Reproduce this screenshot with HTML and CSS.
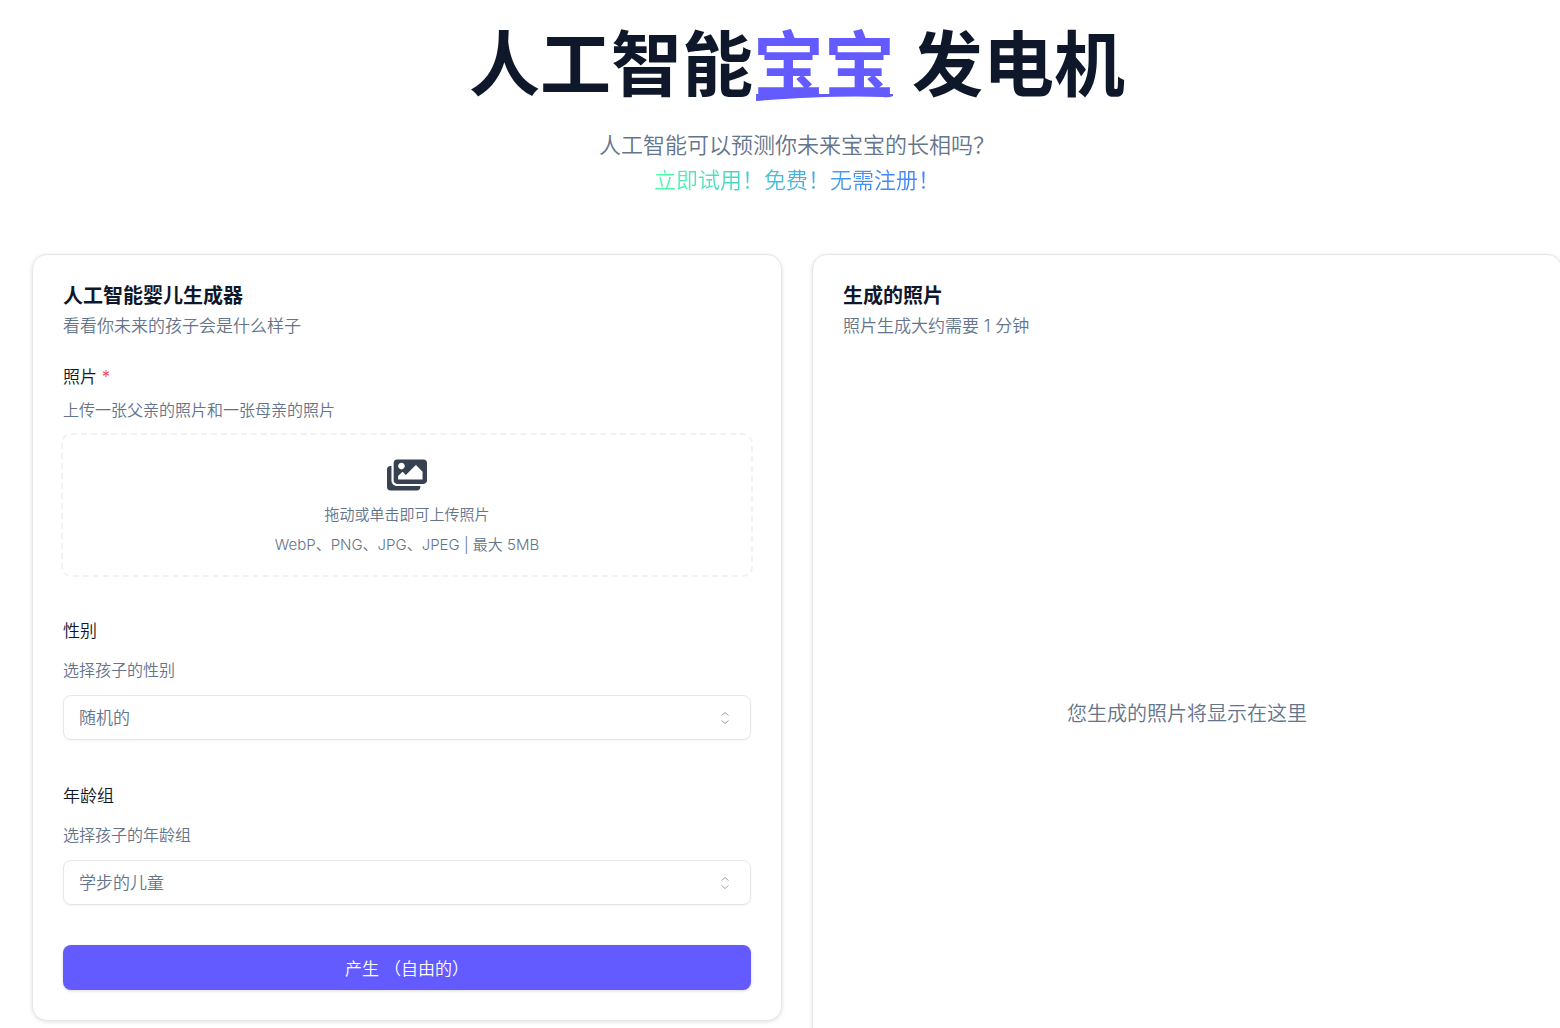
FILE: index.html
```html
<!DOCTYPE html>
<html lang="zh-CN">
<head>
<meta charset="utf-8">
<meta name="viewport" content="width=device-width, initial-scale=1">
<title>人工智能宝宝发电机</title>
<link rel="stylesheet" href="styles.css">
</head>
<body>
<main class="page">
  <header class="hero">
    <h1 class="hero-title">人工智能<span class="accent">宝宝<svg class="swash" viewBox="0 0 140 8" preserveAspectRatio="none" aria-hidden="true"><path d="M3 1H138V3Q134 5 128 4Q80 2 3 8Z"/></svg></span> 发电机</h1>
    <p class="hero-text">人工智能可以预测你未来宝宝的长相吗？<br><span class="gradient">立即试用！免费！无需注册！</span></p>
  </header>
  <div class="columns">
    <section class="card">
      <h2 class="card-title">人工智能婴儿生成器</h2>
      <p class="card-desc">看看你未来的孩子会是什么样子</p>
      <form class="form">
        <div class="field">
          <label class="label label-photo" for="photos">照片 <span class="required">*</span></label>
          <p class="help">上传一张父亲的照片和一张母亲的照片</p>
          <label class="drop">
            <input class="file" id="photos" type="file" accept="image/*" multiple>
            <svg class="drop-icon" viewBox="0 0 576 512" aria-hidden="true"><path d="M480 416v16c0 26.51-21.49 48-48 48H48c-26.51 0-48-21.49-48-48V176c0-26.51 21.49-48 48-48h16v208c0 44.112 35.888 80 80 80h336zm96-80V80c0-26.51-21.49-48-48-48H144c-26.51 0-48 21.49-48 48v256c0 26.51 21.49 48 48 48h384c26.51 0 48-21.49 48-48zM256 128c0 26.51-21.49 48-48 48s-48-21.49-48-48 21.49-48 48-48 48 21.49 48 48zm-96 144l55.515-55.515c4.686-4.686 12.284-4.686 16.971 0L272 256l135.515-135.515c4.686-4.686 12.284-4.686 16.971 0L512 208v112H160v-48z"/></svg>
            <span>拖动或单击即可上传照片</span>
            <span>WebP、PNG、JPG、JPEG | 最大 5MB</span>
          </label>
        </div>
        <div class="field">
          <label class="label" for="gender">性别</label>
          <p class="help">选择孩子的性别</p>
          <div class="select-wrap">
            <select class="select" id="gender"><option>随机的</option></select>
            <svg class="chevrons" viewBox="0 0 10 14" aria-hidden="true"><path d="M1.500 4.500L5 1.500L8.500 4.500M1.500 9.500L5 12.500L8.500 9.500"/></svg>
          </div>
        </div>
        <div class="field">
          <label class="label" for="age">年龄组</label>
          <p class="help">选择孩子的年龄组</p>
          <div class="select-wrap">
            <select class="select" id="age"><option>学步的儿童</option></select>
            <svg class="chevrons" viewBox="0 0 10 14" aria-hidden="true"><path d="M1.500 4.500L5 1.500L8.500 4.500M1.500 9.500L5 12.500L8.500 9.500"/></svg>
          </div>
        </div>
        <button class="submit" type="button">产生 （自由的）</button>
      </form>
    </section>
    <section class="card card-result">
      <h2 class="card-title">生成的照片</h2>
      <p class="card-desc">照片生成大约需要 1 分钟</p>
      <p class="empty">您生成的照片将显示在这里</p>
    </section>
  </div>
</main>
</body>
</html>
```
FILE: styles.css
```css
* { box-sizing: border-box; }

body {
  margin: 0;
  height: 100vh;
  overflow: hidden;
  background: #fff;
  color: #0f172a;
  font-family: Inter, "Noto Sans CJK SC", sans-serif;
  font-weight: 350;
}

h1, h2, p { margin: 0; }

.page { padding: 26px 0 32px 32px; margin-right: -2px; }

.hero { text-align: center; margin-bottom: 56px; }

.hero-title {
  font-size: 71px;
  line-height: 76px;
  font-weight: 700;
  margin-bottom: 26px;
}

.accent { position: relative; color: #635bff; }

.swash {
  position: absolute;
  left: 0;
  bottom: 6px;
  width: 100%;
  height: 8px;
  fill: #635bff;
}

.hero-text { font-size: 22px; line-height: 35px; color: #64748b; }

.gradient {
  background: linear-gradient(90deg, #4dffa6, #4285ff 80%);
  background-clip: text;
  -webkit-background-clip: text;
  color: transparent;
}

.columns {
  display: grid;
  grid-template-columns: 1fr 1fr;
  gap: 30px;
  align-items: start;
}

.card {
  padding: 30px;
  border: 1px solid #e5e7eb;
  border-radius: 15px;
  background: #fff;
  box-shadow: 0 1px 4px rgba(0, 0, 0, 0.12);
}

.card-title {
  font-size: 20px;
  line-height: 22px;
  font-weight: 700;
  margin-bottom: 6px;
}

.card-desc {
  font-size: 17px;
  line-height: 26px;
  color: #64748b;
  margin-bottom: 26px;
}

.form { display: flex; flex-direction: column; gap: 43px; }

.field { display: flex; flex-direction: column; }

.label { font-size: 17px; line-height: 26px; margin-bottom: 14px; }
.label-photo { line-height: 24px; margin-bottom: 9px; }
.required { color: #ef4444; }

.help {
  font-size: 16px;
  line-height: 24px;
  color: #64748b;
  margin-bottom: 13px;
}

.drop {
  display: flex;
  flex-direction: column;
  align-items: center;
  margin: -2px;
  padding: 22px 16px 15px;
  border: 2px dashed #f1f2f4;
  border-radius: 10px;
  font-size: 15px;
  line-height: 30px;
  color: #64748b;
  cursor: pointer;
}

.file { position: absolute; width: 1px; height: 1px; opacity: 0; }

.drop-icon { width: 40px; height: 36px; margin-bottom: 7px; fill: #374151; }

.select-wrap { position: relative; }

.select {
  display: block;
  width: 100%;
  height: 45px;
  padding: 0 15px;
  border: 1px solid #e5e7eb;
  border-radius: 8px;
  background: #fff;
  box-shadow: 0 1px 2px rgba(0, 0, 0, 0.05);
  appearance: none;
  font: inherit;
  font-size: 17px;
  color: #64748b;
}

.chevrons {
  position: absolute;
  right: 21px;
  top: 16px;
  width: 10px;
  height: 14px;
  fill: none;
  stroke: #9ca3b3;
  pointer-events: none;
}

.submit {
  height: 45px;
  margin-top: -3px;
  border: 0;
  border-radius: 8px;
  background: #635bff;
  box-shadow: 0 1px 3px rgba(0, 0, 0, 0.15);
  color: #fff;
  font: inherit;
  font-size: 17px;
  cursor: pointer;
}

.card-result {
  display: flex;
  flex-direction: column;
  min-height: 836px;
}

.empty {
  flex: 1;
  display: flex;
  align-items: center;
  justify-content: center;
  font-size: 20px;
  color: #64748b;
}
```
